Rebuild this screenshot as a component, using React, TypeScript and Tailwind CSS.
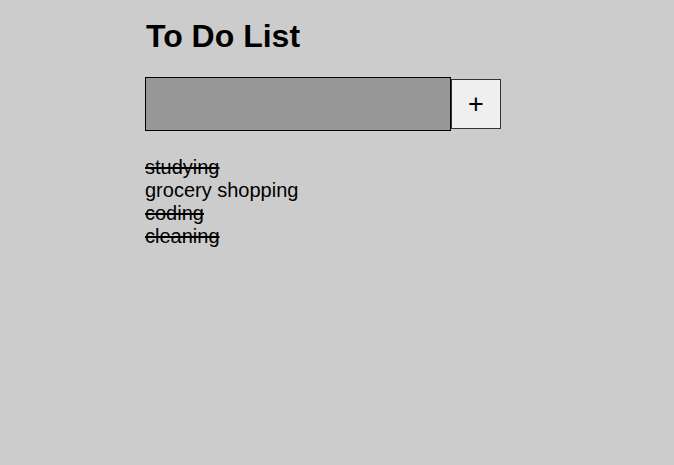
const todos = [
  { text: 'studying', done: true },
  { text: 'grocery shopping', done: false },
  { text: 'coding', done: true },
  { text: 'cleaning', done: true },
];

export default function App() {
  return (
    <div className="min-h-screen bg-[#cccccc] font-['Liberation_Sans',Arial,sans-serif] text-black">
      <div className="mx-auto w-[384px] pt-[18px]">
        <h1 className="pl-[1px] text-[32px] font-bold leading-[37px]">To Do List</h1>
        <div className="mt-[22px] flex items-center">
          <input
            type="text"
            className="h-[54px] w-[306px] border border-black bg-[#979797] outline-none"
          />
          <button className="flex h-[50px] w-[50px] items-center justify-center border border-[#333333] bg-[#efefef] text-[27px] leading-none">
            +
          </button>
        </div>
        <ul className="mt-[25px] text-[20px] leading-[23px]">
          {todos.map((todo) => (
            <li key={todo.text} className={todo.done ? 'line-through' : ''}>
              {todo.text}
            </li>
          ))}
        </ul>
      </div>
    </div>
  );
}
